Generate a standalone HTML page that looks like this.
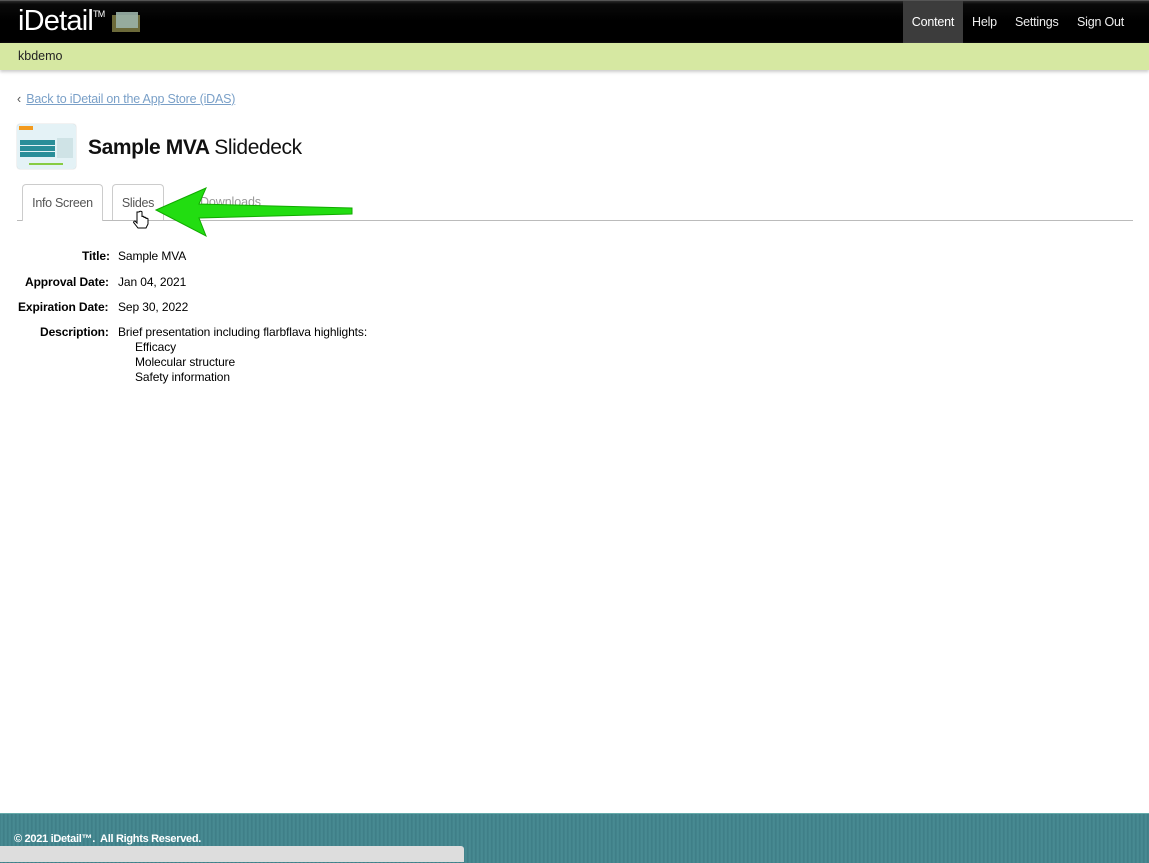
<!DOCTYPE html>
<html><head><meta charset="utf-8"><style>
body{margin:0;width:1149px;height:862px;position:relative;overflow:hidden;background:#fff;font-family:"Liberation Sans",Arial,sans-serif;}
.top{position:absolute;left:0;top:0;width:1149px;height:43px;background:linear-gradient(#2a2a2a 0,#0a0a0a 3px,#000 20px,#000);border-top:1px solid #555;box-sizing:border-box}
.logo{position:absolute;left:18px;top:4px;color:#fff;font-size:29px;letter-spacing:-0.8px}
.logo sup{font-size:9px;vertical-align:top;position:relative;top:4px}
.nav{position:absolute;top:0;height:42px;font-size:12.5px;color:#eee;line-height:43px;letter-spacing:-0.2px}
.sub{position:absolute;top:43px;left:0;width:1149px;height:27px;background:#d6e8a2;box-shadow:0 2px 3px #ccc;font-size:12.5px;line-height:27px;padding-left:18px;box-sizing:border-box;color:#222}
.back{position:absolute;left:17px;top:92px;font-size:12.5px;color:#555;letter-spacing:-0.2px}
.back a{color:#7aa0c8;text-decoration:underline;margin-left:2px}
.thumb{position:absolute;left:17px;top:124px;width:59px;height:45px;background:#e4f2f6;border-radius:3px;box-shadow:0 0 1px #aaa}
h1{position:absolute;left:88px;top:136px;margin:0;font-size:21px;font-weight:bold;color:#111;letter-spacing:-0.4px}
h1 span{font-weight:normal}
.tabs{position:absolute;left:17px;top:220px;width:1116px;border-top:1px solid #bbb}
.tab{position:absolute;top:184px;height:36px;border:1px solid #ccc;border-bottom:none;border-radius:4px 4px 0 0;font-size:12.5px;color:#555;line-height:36px;text-align:center;box-sizing:border-box;background:#fff;letter-spacing:-0.3px}
.r{position:absolute;white-space:nowrap;font-size:12px;letter-spacing:-0.1px}
.foot{position:absolute;left:0;top:813px;width:1149px;height:49px;background:repeating-linear-gradient(90deg,#3f8088 0,#4a8d95 2px,#3b7a83 4px);border-top:1px solid #6aa;}
.foot div{position:absolute;left:14px;top:19px;color:#fff;font-size:11px;font-weight:bold;letter-spacing:-0.3px}
.blur{position:absolute;left:0;top:846px;width:464px;height:16px;background:#ddd;border-radius:0 3px 0 0}
</style></head><body>
<div class="top"><div class="logo">iDetail<sup>TM</sup>
<span style="display:inline-block;position:relative;width:30px;height:20px;vertical-align:-2px"><span style="position:absolute;left:0;top:3px;width:28px;height:17px;background:#6c6a3a"></span><span style="position:absolute;left:4px;top:0;width:22px;height:16px;background:#9bb3a8;opacity:.9"></span></span></div>
<div class="nav" style="left:903px;width:60px;background:#3c3c3c;color:#fff;text-align:center">Content</div>
<div class="nav" style="left:972px">Help</div>
<div class="nav" style="left:1015px">Settings</div>
<div class="nav" style="left:1077px">Sign Out</div>
</div>
<div class="sub">kbdemo</div>
<div class="back">‹ <a>Back to iDetail on the App Store (iDAS)</a></div>
<div class="thumb"><div style="position:absolute;left:2px;top:2px;width:14px;height:4px;background:#f39a1e"></div><div style="position:absolute;left:3px;top:16px;width:35px;height:5px;background:#2a8e99"></div><div style="position:absolute;left:3px;top:22px;width:35px;height:5px;background:#2a8e99"></div><div style="position:absolute;left:3px;top:28px;width:35px;height:5px;background:#2a8e99"></div><div style="position:absolute;left:40px;top:14px;width:16px;height:20px;background:#cfe3e6"></div><div style="position:absolute;left:12px;top:39px;width:34px;height:2px;background:#8c4"></div></div>
<h1>Sample MVA <span>Slidedeck</span></h1>
<div class="tabs"></div>
<div class="tab" style="left:22px;width:81px;height:37px">Info Screen</div>
<div class="tab" style="left:112px;width:52px">Slides</div>
<div class="r" style="left:200px;top:195px;font-size:12.5px;color:#999">Downloads</div>
<svg style="position:absolute;left:150px;top:186px" width="206" height="52"><polygon points="6,24 56,2 49,18 202,22 202,28 49,32 56,50" fill="#22dd11" stroke="#11aa00" stroke-width="1"/></svg>
<svg style="position:absolute;left:132px;top:210px" width="20" height="22"><path d="M5 2v11l-2-2c-1 0-2 1-1 2l4 5h8l2-4v-5c0-1-2-1-2 0v-1c0-1-2-1-2 0v-1c0-1-2-1-2 0V2c0-1-3-1-3 0z" fill="#fff" stroke="#000"/></svg>
<div class="r" style="left:82px;top:249px;font-weight:bold">Title:</div>
<div class="r" style="left:118px;top:249px">Sample MVA</div>
<div class="r" style="left:25px;top:275px;font-weight:bold">Approval Date:</div>
<div class="r" style="left:118px;top:275px">Jan 04, 2021</div>
<div class="r" style="left:18px;top:300px;font-weight:bold">Expiration Date:</div>
<div class="r" style="left:118px;top:300px">Sep 30, 2022</div>
<div class="r" style="left:40px;top:325px;font-weight:bold">Description:</div>
<div class="r" style="left:118px;top:325px;line-height:15px">Brief presentation including flarbflava highlights:<br><span style="padding-left:17px">Efficacy</span><br><span style="padding-left:17px">Molecular structure</span><br><span style="padding-left:17px">Safety information</span></div>
<div class="foot"><div>© 2021 iDetail™.&nbsp; All Rights Reserved.</div></div>
<div class="blur"></div>
</body></html>
